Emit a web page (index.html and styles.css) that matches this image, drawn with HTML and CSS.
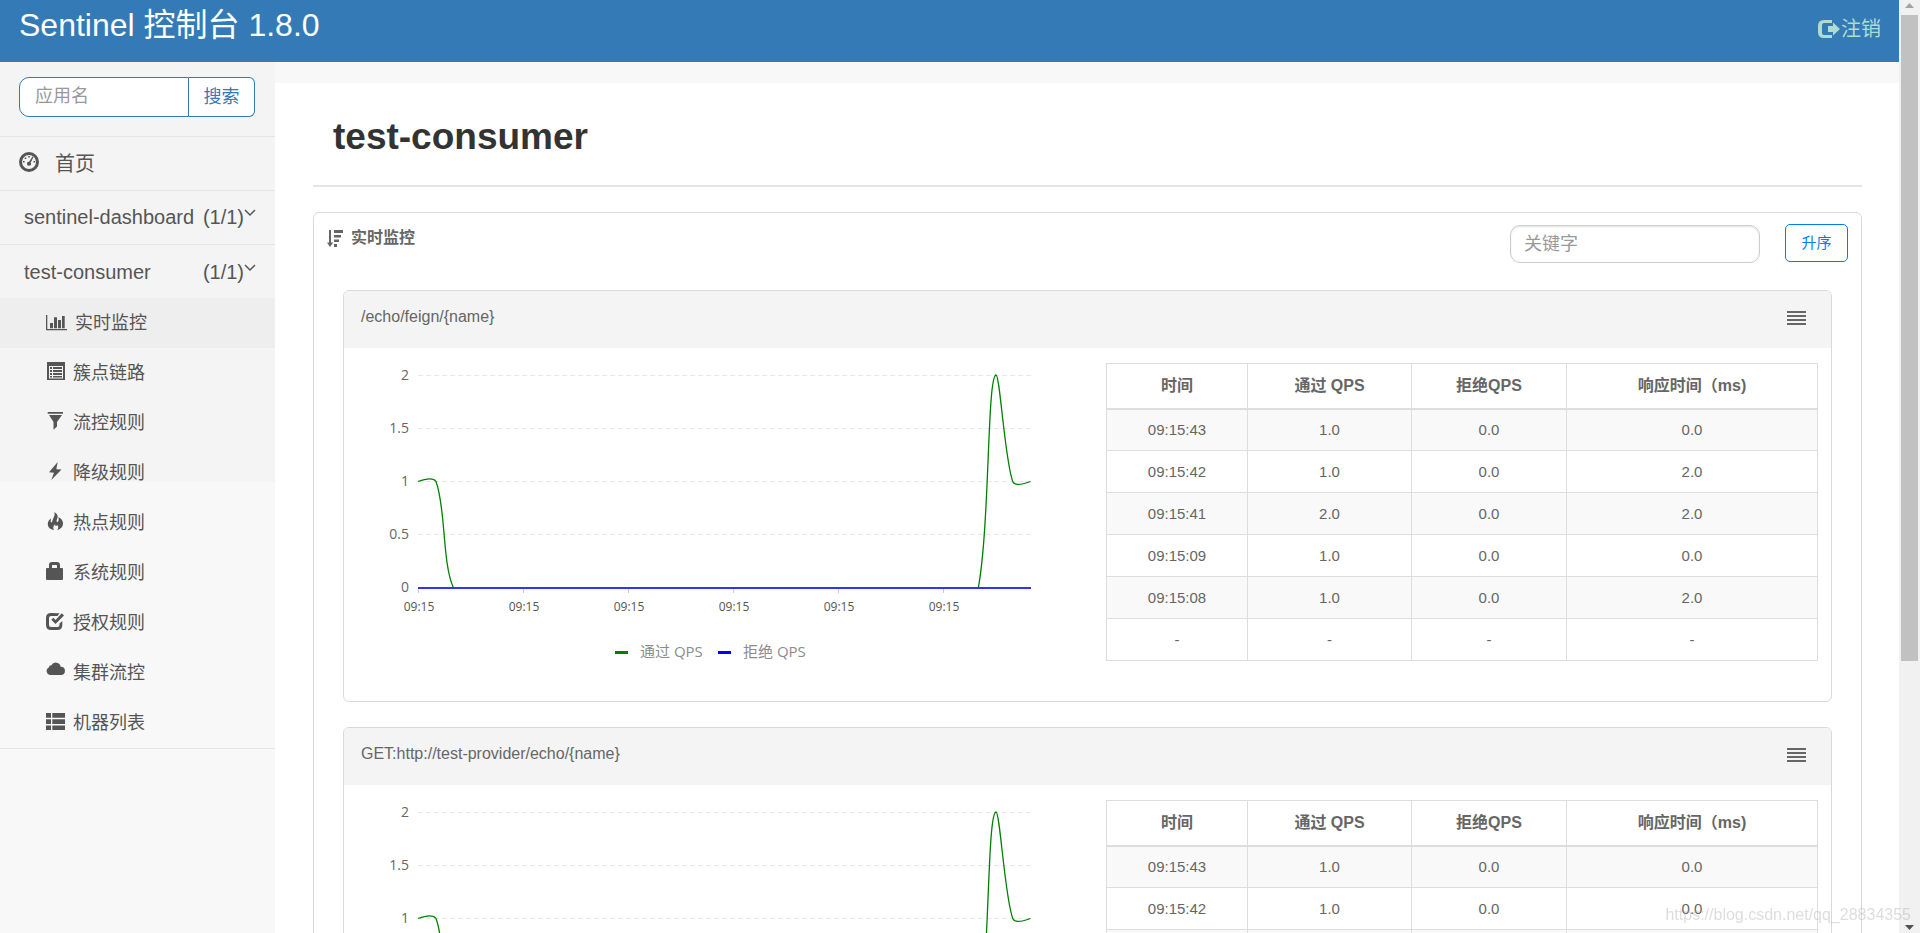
FILE: index.html
```html
<!DOCTYPE html>
<html lang="zh-CN">
<head>
<meta charset="utf-8">
<title>Sentinel 控制台</title>
<link rel="stylesheet" href="styles.css">
</head>
<body>
<header class="topbar">
  <h1 class="brand">Sentinel 控制台 1.8.0</h1>
  <a class="logout" href="#">
    <svg width="22" height="18" viewBox="0 0 22 18"><path d="M14 0v3H6Q4 3 4 5v8q0 2 2 2h8v3H6Q0 18 0 12V6Q0 0 6 0zM10 6h5V2.500L22 9l-7 6.500V12h-5z"/></svg><span>注销</span>
  </a>
</header>

<div class="layout">
  <nav class="sidebar">
    <form class="search">
      <input type="text" placeholder="应用名" aria-label="应用名"><button type="button">搜索</button>
    </form>
    <a class="home" href="#">
      <svg width="20" height="24" viewBox="0 0 20 24"><circle cx="10" cy="10" r="8.500" fill="none" stroke="currentColor" stroke-width="3"/><path d="M13.500 4.500l1 .6-2.800 5.600a2 2 0 1 1-1.600-1zM9.200 4h1.600v1.600H9.200zM5.700 5.500h1.600v1.600H5.700zM4 9h1.600v1.600H4zM14.500 9h1.600v1.600h-1.600z"/></svg>
      <span>首页</span>
    </a>
    <a class="app" href="#"><span>sentinel-dashboard</span><span class="count">(1/1)<svg width="12" height="18" viewBox="0 0 12 18"><path d="M1 2l5 5 5-5"/></svg></span></a>
    <a class="app open" href="#"><span>test-consumer</span><span class="count">(1/1)<svg width="12" height="18" viewBox="0 0 12 18"><path d="M1 2l5 5 5-5"/></svg></span></a>
    <ul class="menu">
      <li><a class="active" href="#"><svg width="22" height="22" viewBox="0 0 22 22"><path d="M0 3h1.300v14H21v1.300H0zM4 11h3v5.300H4zM8 5.300h3v11H8zM12 8h3v8.300h-3zM16 4h2.700v12.300H16z"/></svg>实时监控</a></li>
      <li><a href="#"><svg width="20" height="22" viewBox="0 0 20 22"><path fill-rule="evenodd" d="M1 0H19v18H1zM3 4v12.500h14V4zM4 5H6v2H4zM7 5h9v2H7zM4 8H6v2H4zM7 8h9v2H7zM4 11H6v2H4zM7 11h9v2H7zM4 14H6v1.500H4zM7 14h9v1.500H7z"/></svg>簇点链路</a></li>
      <li><a href="#"><svg width="20" height="22" viewBox="0 0 20 22"><path d="M1.700 0H17v1.800H1.700zM3 3h13l-5 7v4.500L7.500 17.800V10z"/></svg>流控规则</a></li>
      <li><a href="#"><svg width="20" height="22" viewBox="0 0 20 22"><path d="M11.700 0L3 10.300l5 .4L5.300 18 15.500 7.600l-5.200-.4z"/></svg>降级规则</a></li>
      <li><a href="#"><svg width="20" height="22" viewBox="0 0 20 22"><path d="M8.300 0c4 2.500 3.800 4.800 2.700 7.300-.8 1.800-.5 2.700.3 2.700 1.500 0 1.600-3.300 1-5C15.500 6.300 17 9 17 11.500c0 3.500-2.500 5.900-6 6.500 1.500-1.200 1.800-3.500.2-5-1.200 1.500-2.200 1-2-.7C7 13.800 6.700 16.200 8 18c-3.500-.5-6-2.500-6.200-5.500C1.600 9.800 3.300 7.700 5 6.300c-.3 2-.6 4.200.3 4.200 1 0 .8-1.500 1.700-3.500C8 4.800 9.300 2.800 8.300 0z"/></svg>热点规则</a></li>
      <li><a href="#"><svg width="20" height="22" viewBox="0 0 20 22"><path fill-rule="evenodd" d="M3 6V3Q3 0 6 0h5q3 0 3 3v3h2q1 0 1 1v10q0 1-1 1H1q-1 0-1-1V7q0-1 1-1zM6 6h5V3.500Q11 3 10.500 3h-4Q6 3 6 3.500z"/></svg>系统规则</a></li>
      <li><a href="#"><svg width="20" height="22" viewBox="0 0 20 22"><path d="M13.500 1.200L11.500 4H5Q3 4 3 6v7q0 2 2 2h6.500q2 0 2-2v-1.500l2.800-2.600V13q0 5-5 5H5q-5 0-5-5V6q0-5 5-5zM15.800 1.200L18 3.400 9.500 12 5.300 7.700l2-2 2.200 2.200z"/></svg>授权规则</a></li>
      <li><a href="#"><svg width="20" height="22" viewBox="0 0 20 22"><path d="M4 13a4 4 0 0 1-1.200-7.500 2.700 2.700 0 0 1 2.600-2.300 5 5 0 0 1 9.300 1.600A4.100 4.100 0 0 1 15 13z"/></svg>集群流控</a></li>
      <li><a href="#"><svg width="20" height="22" viewBox="0 0 20 22"><path d="M0 1h5v4.700H0zM6.300 1H19v4.700H6.300zM0 7.200h5v4.700H0zM6.300 7.200H19v4.700H6.300zM0 13.400h5V18H0zM6.300 13.400H19V18H6.300z"/></svg>机器列表</a></li>
    </ul>
  </nav>

  <main class="content">
    <h2 class="title">test-consumer</h2>
    <section class="card">
      <div class="card-head">
        <svg width="16" height="17" viewBox="0 0 16 17"><path d="M2 0h2v12.500H6.200L3 17 0 12.500h2zM7 0H16v3H7zM7 5h7v2.500H7zM7 9.500H12v2.500H7zM7 14H10v3H7z"/></svg>
        <span class="card-name">实时监控</span>
        <input type="text" placeholder="关键字" aria-label="关键字">
        <button type="button">升序</button>
      </div>

      <article class="panel">
        <div class="panel-head"><span>/echo/feign/{name}</span><button type="button" aria-label="列表"><svg width="19" height="14" viewBox="0 0 19 14"><path d="M0 0h19v2H0zM0 4h19v2H0zM0 8h19v2H0zM0 12h19v2H0z"/></svg></button></div>
        <div class="panel-body">
          <svg class="chart" viewBox="0 0 712 310">
            <path class="grid" d="M59 12.500H672M59 65.500H672M59 118.500H672M59 171.500H672"/>
            <path class="ticks" d="M59.500 226v4M164.500 226v4M269.500 226v4M374.500 226v4M479.500 226v4M584.500 226v4"/>
            <path class="pass" d="M59 118.500C66 116 74 114 77 118.500C87 145 83 200 94.500 225H619.300C631 160 628 14 637 12C641 12 646 100 654 119C656 123 662 122 671.500 118.500"/>
            <path class="block" d="M59 225H672"/>
            <g class="ylab"><text x="50" y="17">2</text><text x="50" y="70">1.5</text><text x="50" y="123">1</text><text x="50" y="176">0.5</text><text x="50" y="229">0</text></g>
            <g class="xlab"><text x="60" y="248">09:15</text><text x="165" y="248">09:15</text><text x="270" y="248">09:15</text><text x="375" y="248">09:15</text><text x="480" y="248">09:15</text><text x="585" y="248">09:15</text></g>
            <path class="key-pass" d="M256 289.500h13"/>
            <path class="key-block" d="M359 289.500h13"/>
            <g class="legend"><text x="281" y="294">通过 QPS</text><text x="384" y="294">拒绝 QPS</text></g>
          </svg>
          <table>
            <colgroup><col class="c-time"><col class="c-pass"><col class="c-block"><col></colgroup>
            <thead><tr><th>时间</th><th>通过 QPS</th><th>拒绝QPS</th><th>响应时间（ms)</th></tr></thead>
            <tbody>
              <tr><td>09:15:43</td><td>1.0</td><td>0.0</td><td>0.0</td></tr>
              <tr><td>09:15:42</td><td>1.0</td><td>0.0</td><td>2.0</td></tr>
              <tr><td>09:15:41</td><td>2.0</td><td>0.0</td><td>2.0</td></tr>
              <tr><td>09:15:09</td><td>1.0</td><td>0.0</td><td>0.0</td></tr>
              <tr><td>09:15:08</td><td>1.0</td><td>0.0</td><td>2.0</td></tr>
              <tr><td>-</td><td>-</td><td>-</td><td>-</td></tr>
            </tbody>
          </table>
        </div>
      </article>

      <article class="panel">
        <div class="panel-head"><span>GET:http://test-provider/echo/{name}</span><button type="button" aria-label="列表"><svg width="19" height="14" viewBox="0 0 19 14"><path d="M0 0h19v2H0zM0 4h19v2H0zM0 8h19v2H0zM0 12h19v2H0z"/></svg></button></div>
        <div class="panel-body">
          <svg class="chart" viewBox="0 0 712 310">
            <path class="grid" d="M59 12.500H672M59 65.500H672M59 118.500H672M59 171.500H672"/>
            <path class="pass" d="M59 118.500C66 116 74 114 77 118.500C87 145 83 200 94.500 225H619.300C631 160 628 14 637 12C641 12 646 100 654 119C656 123 662 122 671.500 118.500"/>
            <path class="block" d="M59 225H672"/>
            <g class="ylab"><text x="50" y="17">2</text><text x="50" y="70">1.5</text><text x="50" y="123">1</text></g>
          </svg>
          <table>
            <colgroup><col class="c-time"><col class="c-pass"><col class="c-block"><col></colgroup>
            <thead><tr><th>时间</th><th>通过 QPS</th><th>拒绝QPS</th><th>响应时间（ms)</th></tr></thead>
            <tbody>
              <tr><td>09:15:43</td><td>1.0</td><td>0.0</td><td>0.0</td></tr>
              <tr><td>09:15:42</td><td>1.0</td><td>0.0</td><td>0.0</td></tr>
              <tr><td></td><td></td><td></td><td></td></tr>
            </tbody>
          </table>
        </div>
      </article>
    </section>
  </main>
</div>

<div class="scrollbar" aria-hidden="true">
  <svg width="9" height="5" viewBox="0 0 9 5"><path fill="#a3a3a3" d="M0 5L4.500 0 9 5z"/></svg>
  <div class="track"><div class="thumb"></div></div>
  <svg width="9" height="5" viewBox="0 0 9 5"><path fill="#505050" d="M0 0h9L4.500 5z"/></svg>
</div>
<div class="watermark">https://blog.csdn.net/qq_28834355</div>
</body>
</html>
```

FILE: styles.css
```css
* { box-sizing: border-box; }

body {
  margin: 0;
  height: 100vh;
  overflow: hidden;
  padding-right: 21px;
  display: flex;
  flex-direction: column;
  background: #f8f8f8;
  color: #666;
  font: 16px/24px "Liberation Sans", "Noto Sans CJK SC", sans-serif;
}

svg { fill: currentColor; flex: none; }
a { color: inherit; text-decoration: none; }
button, input { font: inherit; }
button { cursor: pointer; }
input::placeholder { color: #999; opacity: 1; }

.topbar {
  flex: none;
  height: 62px;
  padding: 0 18px 0 19px;
  display: flex;
  justify-content: space-between;
  background: #337ab7;
  color: #fff;
}
.brand { margin: 0; font-size: 32px; font-weight: 400; line-height: 50px; }
.logout {
  display: flex;
  align-items: center;
  gap: 1px;
  height: 58px;
  color: #b0dccf;
  font-size: 20px;
}

.layout { flex: 1; display: flex; min-height: 0; }

.sidebar {
  flex: none;
  width: 275px;
  color: #555;
  font-size: 20px;
  background: linear-gradient(#f4f4f4, #f4f4f4) 0 0 / 100% 420px no-repeat;
}
.search {
  display: flex;
  padding: 15px 20px 19px 19px;
  border-bottom: 1px solid #e4e4e4;
  font-size: 18px;
}
.search input {
  width: 0;
  flex: 1;
  height: 40px;
  padding: 0 15px 2px;
  border: 1px solid #337ab7;
  border-radius: 10px 0 0 10px;
  background: #fff;
}
.search button {
  width: 66px;
  padding: 0;
  border: 1px solid #337ab7;
  border-left: 0;
  border-radius: 0 6px 6px 0;
  background: #fff;
  color: #337ab7;
}
.home, .app { display: flex; align-items: center; height: 54px; border-bottom: 1px solid #e4e4e4; }
.home { padding-left: 19px; gap: 16px; }
.app { justify-content: space-between; padding: 0 19px 2px 24px; }
.app.open { height: 53px; padding-bottom: 0; border-bottom: 0; }
.count { display: flex; align-items: center; }
.count svg { fill: none; stroke: currentColor; stroke-width: 1.500; }

.menu { margin: 0; padding: 0; list-style: none; border-bottom: 1px solid #e4e4e4; font-size: 18px; }
.menu a { display: flex; align-items: center; gap: 7px; height: 50px; padding-left: 46px; }
.menu .active { background: #eee; }

.content {
  flex: 1;
  min-width: 0;
  margin-top: 21px;
  padding: 0 37px 0 38px;
  overflow: hidden;
  background: #fff;
}
.title {
  margin: 0 0 25px;
  padding: 30px 20px 24px;
  border-bottom: 2px solid #e4e4e4;
  color: #333;
  font-size: 37px;
  line-height: 48px;
}
.card { padding: 0 29px; border: 1px solid #d9d9d9; border-radius: 6px; }
.card-head { display: flex; align-items: flex-start; height: 77px; margin: 0 -16px; padding-top: 11px; }
.card-head svg { margin-top: 6px; }
.card-name { flex: 1; margin-left: 8px; line-height: 28px; font-weight: 700; }
.card-head input {
  width: 250px;
  height: 38px;
  margin: 1px 25px 0 0;
  padding: 0 13px;
  border: 1px solid #ccc;
  border-radius: 10px;
  box-shadow: inset 0 1px 2px #e4e4e4;
  font-size: 18px;
}
.card-head button {
  width: 63px;
  height: 38px;
  padding: 0;
  border: 1px solid #007bff;
  border-radius: 5px;
  background: #fff;
  color: #007bff;
  font-size: 15px;
}

.panel { margin-bottom: 25px; border: 1px solid #d9d9d9; border-radius: 6px; }
.panel-head {
  display: flex;
  justify-content: space-between;
  height: 57px;
  padding: 14px 25px 0 17px;
  border-radius: 5px 5px 0 0;
  background: #f4f4f4;
}
.panel-head button { display: flex; align-items: center; height: 26px; padding: 0; border: 0; background: none; color: #666; }
.panel-body {
  display: grid;
  grid-template-columns: 1fr 1fr;
  gap: 35px;
  align-items: start;
  padding: 15px 13px 28px 15px;
}

.chart { display: block; width: 100%; font-family: "Open Sans", "Noto Sans CJK SC", sans-serif; }
.grid { stroke: #e6e6e6; stroke-dasharray: 5 3; }
.ticks { stroke: #ccc; }
.pass { fill: none; stroke: #008000; stroke-width: 1.300; }
.block { stroke: #33f; stroke-width: 2; }
.key-pass { stroke: #008000; stroke-width: 3; }
.key-block { stroke: #00f; stroke-width: 3; }
.ylab { font-size: 14px; text-anchor: end; }
.xlab { font-size: 12px; text-anchor: middle; fill: #555; }
.legend { font-size: 15px; fill: #8c8c8c; }

table { width: 100%; table-layout: fixed; border-collapse: collapse; text-align: center; font-size: 15px; }
th, td { padding: 0; border: 1px solid #ddd; }
th { height: 45px; border-bottom-width: 2px; font-size: 16px; }
td { height: 42px; }
tbody tr:nth-child(odd) { background: #f9f9f9; }
.c-time { width: 141px; }
.c-pass { width: 164px; }
.c-block { width: 155px; }

.scrollbar {
  position: fixed;
  inset: 0 0 0 auto;
  width: 21px;
  padding: 3px 2px;
  display: flex;
  flex-direction: column;
  align-items: center;
  gap: 7px;
  background: #f1f1f1;
}
.track { flex: 1; align-self: stretch; }
.thumb { height: 71.5%; background: #c1c1c1; }

.watermark {
  position: fixed;
  right: 9px;
  bottom: 7px;
  color: rgba(170, 170, 170, 0.4);
  font-size: 16px;
  line-height: 22px;
}
```
